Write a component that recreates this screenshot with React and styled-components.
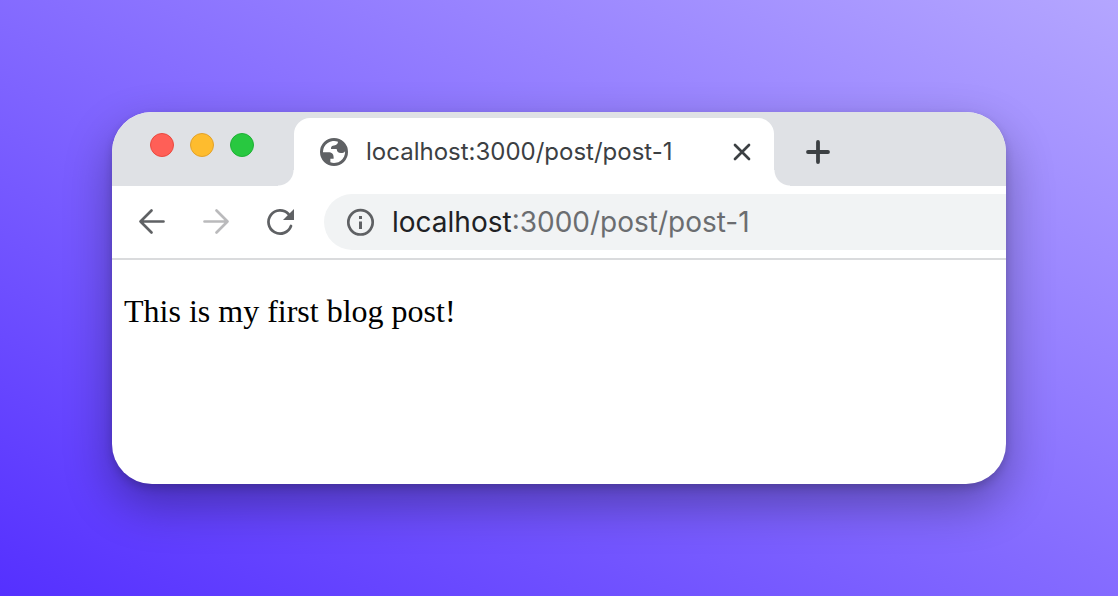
import React, { useState } from "react";
import styled, { createGlobalStyle } from "styled-components";

const GlobalStyle = createGlobalStyle`
  *, *::before, *::after { box-sizing: border-box; }
  body { margin: 0; }
`;

const Stage = styled.main`
  display: flex;
  min-height: 100vh;
  padding: 112px;
  background: linear-gradient(to top right, #5530ff, #b4a6ff);
`;

const BrowserWindow = styled.section`
  flex: 1;
  min-width: 0;
  display: flex;
  flex-direction: column;
  overflow: hidden;
  border-radius: 40px;
  background: #fff;
  box-shadow: 0 20px 48px rgba(0, 0, 0, 0.32), 0 4px 8px rgba(0, 0, 0, 0.16);
  font-family: Inter, "Liberation Sans", sans-serif;
`;

const TabStrip = styled.header`
  display: flex;
  height: 74px;
  padding: 6px 38px 0;
  background: #dfe1e5;
`;

const WindowControls = styled.div`
  display: flex;
  gap: 16px;
  padding-top: 15px;
  margin-right: 40px;
`;

const ControlDot = styled.button`
  width: 24px;
  height: 24px;
  padding: 0;
  border: 1px solid ${(p) => p.$edge};
  border-radius: 50%;
  background: ${(p) => p.$fill};
`;

const Tab = styled.div`
  position: relative;
  display: flex;
  align-items: center;
  width: 480px;
  padding: 0 16px 0 24px;
  border-radius: 16px 16px 0 0;
  background: #fff;

  &::before,
  &::after {
    content: "";
    position: absolute;
    bottom: 0;
    width: 16px;
    height: 16px;
  }
  &::before {
    right: 100%;
    background: radial-gradient(circle at 0 0, transparent 15px, #fff 16px);
  }
  &::after {
    left: 100%;
    background: radial-gradient(circle at 100% 0, transparent 15px, #fff 16px);
  }
`;

const TabTitle = styled.span`
  flex: 1;
  margin-left: 16px;
  color: #3c4043;
  font-size: 24px;
  line-height: 32px;
  white-space: nowrap;
`;

const IconButton = styled.button`
  display: grid;
  place-items: center;
  flex: none;
  align-self: center;
  width: 32px;
  height: 32px;
  padding: 0;
  border: 0;
  background: none;
  color: ${(p) => p.$tone || "#5f6164"};
`;

const NewTabSlot = styled.div`
  display: flex;
  margin-left: 28px;
`;

const Toolbar = styled.div`
  display: flex;
  align-items: center;
  gap: 28px;
  height: 74px;
  padding-left: 24px;
  border-bottom: 2px solid #dadbdd;
`;

const Navigation = styled.nav`
  display: flex;
  gap: 32px;
`;

const AddressBar = styled.form`
  flex: 1;
  min-width: 0;
  display: flex;
  align-items: center;
  height: 56px;
  padding-left: 20px;
  border-radius: 28px 0 0 28px;
  background: #f1f3f4;
  font-size: 28px;
  line-height: 36px;
`;

const Host = styled.label`
  margin-left: 16px;
  color: #202124;
`;

const UrlPath = styled.input`
  flex: 1;
  min-width: 0;
  height: 36px;
  padding: 0;
  border: 0;
  outline: 0;
  background: none;
  color: #6b6d70;
  font: inherit;
`;

const Page = styled.article`
  flex: 1;
  padding: 32px 12px;
  color: #000;
  font-family: "Liberation Serif", serif;
  font-size: 32px;
  line-height: 38px;
`;

const Paragraph = styled.p`
  margin: 0;
`;

const GlobeIcon = () => (
  <svg width="32" height="32" viewBox="0 0 32 32" aria-hidden="true">
    <path
      transform="translate(-0.8 -0.8) scale(1.4)"
      fill="#5f6164"
      fillRule="evenodd"
      d="M12 2a10 10 0 1 0 0 20a10 10 0 1 0 0-20zM4.1 12.2H7.8C10.8 12.2 12 13.6 11.7 16.8H9.4V19.4A7.9 7.9 0 0 0 19.9 11.4C19.2 12.4 18.2 12.8 17 12.8C15 12.8 14.1 11.7 13.9 9.9H9.9C9.6 8.4 10.5 7.4 12.1 7.3C13.8 7.1 14.7 6.2 14.9 4.7A7.9 7.9 0 0 0 4.1 12.2z"
    />
  </svg>
);

const StrokeIcon = ({ d, weight = 2.7, children }) => (
  <svg
    width="32"
    height="32"
    viewBox="0 0 32 32"
    fill="none"
    stroke="currentColor"
    strokeWidth={weight}
    strokeLinecap="round"
    strokeLinejoin="round"
    aria-hidden="true"
  >
    <path d={d} />
    {children}
  </svg>
);

const InfoIcon = () => (
  <svg width="32" height="32" viewBox="0 0 32 32" fill="none" aria-hidden="true">
    <circle cx="16.5" cy="16.3" r="12.2" stroke="#5f6164" strokeWidth="2.7" />
    <path d="M15 15.5h3v7.5h-3zM15 10h3v3h-3z" fill="#5f6164" />
  </svg>
);

export default function App() {
  const [path, setPath] = useState(":3000/post/post-1");

  return (
    <>
      <GlobalStyle />
      <Stage>
        <BrowserWindow>
          <TabStrip>
            <WindowControls>
              <ControlDot aria-label="Close window" $fill="#ff5f57" $edge="#e9493f" />
              <ControlDot aria-label="Minimize window" $fill="#febc2e" $edge="#e2a12a" />
              <ControlDot aria-label="Zoom window" $fill="#28c840" $edge="#1fb035" />
            </WindowControls>
            <Tab>
              <GlobeIcon />
              <TabTitle>localhost:3000/post/post-1</TabTitle>
              <IconButton aria-label="Close tab" $tone="#3c4043">
                <StrokeIcon d="M9 9l14 14M23 9L9 23" />
              </IconButton>
            </Tab>
            <NewTabSlot>
              <IconButton aria-label="New tab" $tone="#3c4043">
                <StrokeIcon weight={3.8} d="M16 6v20M6 16h20" />
              </IconButton>
            </NewTabSlot>
          </TabStrip>
          <Toolbar>
            <Navigation aria-label="History">
              <IconButton aria-label="Back">
                <StrokeIcon d="M27.5 15.5H4.5M15.5 4.5L4.5 15.5L15.5 26.5" />
              </IconButton>
              <IconButton aria-label="Forward" $tone="#bababc">
                <StrokeIcon d="M4.5 15.5H27.5M16.5 4.5L27.5 15.5L16.5 26.5" />
              </IconButton>
              <IconButton aria-label="Reload">
                <StrokeIcon d="M27 20A11.6 11.6 0 1 1 24.5 8">
                  <path d="M30 3V14H19z" fill="currentColor" stroke="none" />
                </StrokeIcon>
              </IconButton>
            </Navigation>
            <AddressBar onSubmit={(e) => e.preventDefault()}>
              <InfoIcon />
              <Host htmlFor="url-path">localhost</Host>
              <UrlPath
                id="url-path"
                value={path}
                spellCheck={false}
                onChange={(e) => setPath(e.target.value)}
              />
            </AddressBar>
          </Toolbar>
          <Page>
            <Paragraph>This is my first blog post!</Paragraph>
          </Page>
        </BrowserWindow>
      </Stage>
    </>
  );
}
